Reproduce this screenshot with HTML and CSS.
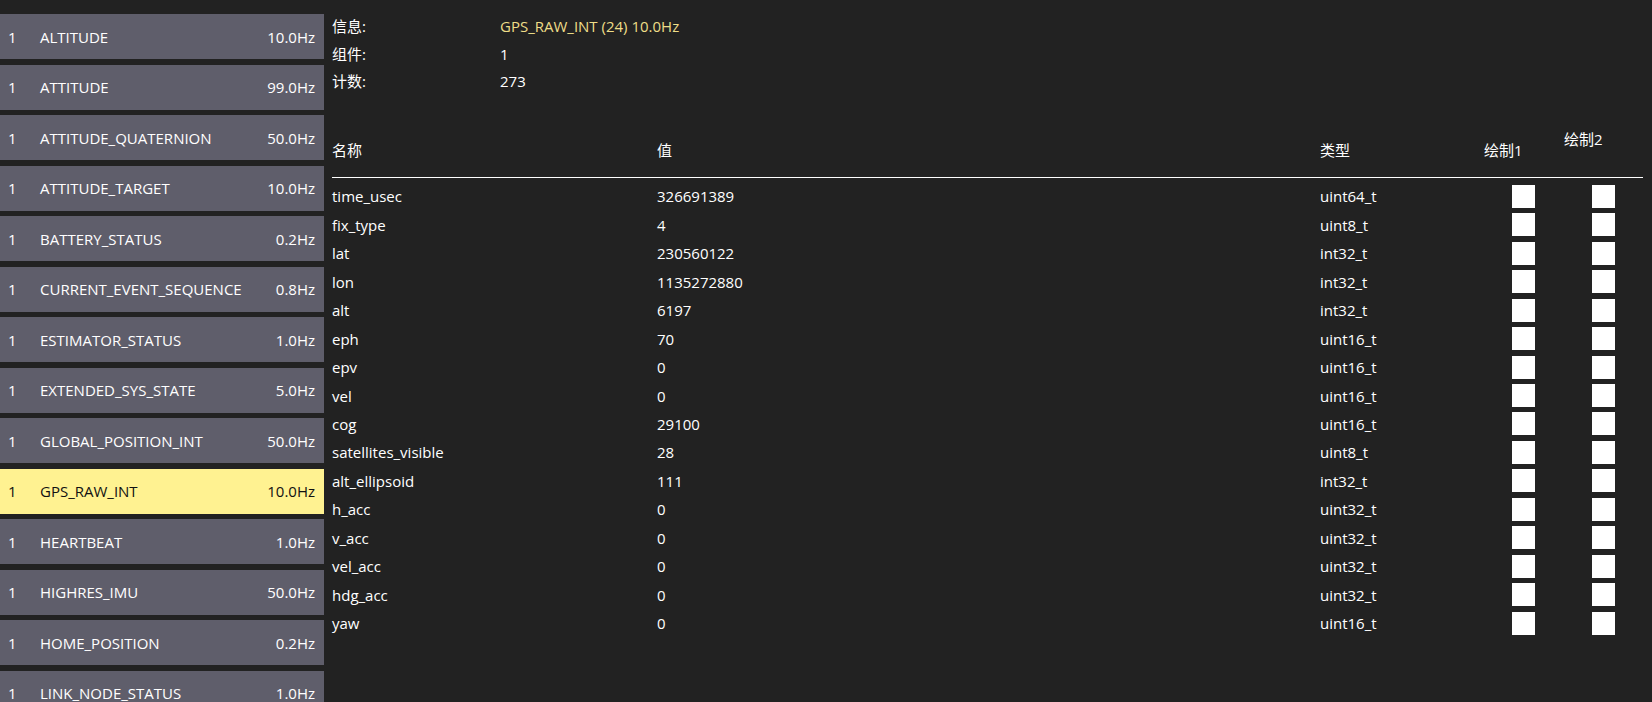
FILE: index.html
```html
<!DOCTYPE html>
<html>
<head>
<meta charset="utf-8">
<link rel="stylesheet" href="styles.css">
</head>
<body>
<div class="app">
  <div class="sidebar">
    <div class="msg"><span class="cid">1</span><span class="mname">ALTITUDE</span><span class="hz">10.0Hz</span></div>
    <div class="msg"><span class="cid">1</span><span class="mname">ATTITUDE</span><span class="hz">99.0Hz</span></div>
    <div class="msg"><span class="cid">1</span><span class="mname">ATTITUDE_QUATERNION</span><span class="hz">50.0Hz</span></div>
    <div class="msg"><span class="cid">1</span><span class="mname">ATTITUDE_TARGET</span><span class="hz">10.0Hz</span></div>
    <div class="msg"><span class="cid">1</span><span class="mname">BATTERY_STATUS</span><span class="hz">0.2Hz</span></div>
    <div class="msg"><span class="cid">1</span><span class="mname">CURRENT_EVENT_SEQUENCE</span><span class="hz">0.8Hz</span></div>
    <div class="msg"><span class="cid">1</span><span class="mname">ESTIMATOR_STATUS</span><span class="hz">1.0Hz</span></div>
    <div class="msg"><span class="cid">1</span><span class="mname">EXTENDED_SYS_STATE</span><span class="hz">5.0Hz</span></div>
    <div class="msg"><span class="cid">1</span><span class="mname">GLOBAL_POSITION_INT</span><span class="hz">50.0Hz</span></div>
    <div class="msg selected"><span class="cid">1</span><span class="mname">GPS_RAW_INT</span><span class="hz">10.0Hz</span></div>
    <div class="msg"><span class="cid">1</span><span class="mname">HEARTBEAT</span><span class="hz">1.0Hz</span></div>
    <div class="msg"><span class="cid">1</span><span class="mname">HIGHRES_IMU</span><span class="hz">50.0Hz</span></div>
    <div class="msg"><span class="cid">1</span><span class="mname">HOME_POSITION</span><span class="hz">0.2Hz</span></div>
    <div class="msg"><span class="cid">1</span><span class="mname">LINK_NODE_STATUS</span><span class="hz">1.0Hz</span></div>
  </div>
  <div class="detail">
    <div class="info">
      <div class="info-row"><span class="ilabel">信息:</span><span class="ivalue accent">GPS_RAW_INT (24) 10.0Hz</span></div>
      <div class="info-row"><span class="ilabel">组件:</span><span class="ivalue">1</span></div>
      <div class="info-row"><span class="ilabel">计数:</span><span class="ivalue">273</span></div>
    </div>
    <div class="thead">
      <span class="th">名称</span>
      <span class="th">值</span>
      <span class="th">类型</span>
      <span class="th">绘制1</span>
      <span class="th th-high">绘制2</span>
    </div>
    <div class="tbody">
      <div class="tr"><span>time_usec</span><span>326691389</span><span>uint64_t</span><span class="cb"></span><span class="cb"></span></div>
      <div class="tr"><span>fix_type</span><span>4</span><span>uint8_t</span><span class="cb"></span><span class="cb"></span></div>
      <div class="tr"><span>lat</span><span>230560122</span><span>int32_t</span><span class="cb"></span><span class="cb"></span></div>
      <div class="tr"><span>lon</span><span>1135272880</span><span>int32_t</span><span class="cb"></span><span class="cb"></span></div>
      <div class="tr"><span>alt</span><span>6197</span><span>int32_t</span><span class="cb"></span><span class="cb"></span></div>
      <div class="tr"><span>eph</span><span>70</span><span>uint16_t</span><span class="cb"></span><span class="cb"></span></div>
      <div class="tr"><span>epv</span><span>0</span><span>uint16_t</span><span class="cb"></span><span class="cb"></span></div>
      <div class="tr"><span>vel</span><span>0</span><span>uint16_t</span><span class="cb"></span><span class="cb"></span></div>
      <div class="tr"><span>cog</span><span>29100</span><span>uint16_t</span><span class="cb"></span><span class="cb"></span></div>
      <div class="tr"><span>satellites_visible</span><span>28</span><span>uint8_t</span><span class="cb"></span><span class="cb"></span></div>
      <div class="tr"><span>alt_ellipsoid</span><span>111</span><span>int32_t</span><span class="cb"></span><span class="cb"></span></div>
      <div class="tr"><span>h_acc</span><span>0</span><span>uint32_t</span><span class="cb"></span><span class="cb"></span></div>
      <div class="tr"><span>v_acc</span><span>0</span><span>uint32_t</span><span class="cb"></span><span class="cb"></span></div>
      <div class="tr"><span>vel_acc</span><span>0</span><span>uint32_t</span><span class="cb"></span><span class="cb"></span></div>
      <div class="tr"><span>hdg_acc</span><span>0</span><span>uint32_t</span><span class="cb"></span><span class="cb"></span></div>
      <div class="tr"><span>yaw</span><span>0</span><span>uint16_t</span><span class="cb"></span><span class="cb"></span></div>
    </div>
  </div>
</div>
</body>
</html>
```

FILE: styles.css
```css
html, body {
  margin: 0;
  padding: 0;
  height: 100%;
  overflow: hidden;
  background: #222222;
}
body {
  font-family: "Open Sans", "Noto Sans CJK SC", sans-serif;
  font-size: 15px;
  color: #ffffff;
}
.app {
  display: flex;
  height: 702px;
  overflow: hidden;
}
.sidebar {
  width: 324px;
  flex: none;
  padding-top: 14px;
  display: flex;
  flex-direction: column;
  gap: 5.5px;
}
.msg {
  flex: none;
  height: 45px;
  background: #5f5e6b;
  display: flex;
  align-items: center;
  padding: 0 9px 0 8px;
  color: #ffffff;
}
.msg.selected {
  background: #fff291;
  color: #111111;
}
.cid {
  width: 32px;
  flex: none;
}
.mname {
  flex: 1;
}
.hz {
  flex: none;
}
.detail {
  flex: 1;
  padding-left: 8px;
  padding-right: 9px;
  display: flex;
  flex-direction: column;
}
.info {
  padding-top: 13px;
}
.info-row {
  display: flex;
  height: 27.5px;
  line-height: 27.5px;
}
.ilabel {
  width: 168px;
  flex: none;
}
.accent {
  color: #eedd88;
}
.thead, .tr {
  display: grid;
  grid-template-columns: 325px 663px 164px 80px 79px;
}
.thead {
  margin-top: 32px;
  height: 35px;
  border-bottom: 1px solid #ffffff;
  padding-bottom: 14px;
}
.th {
  line-height: 26px;
  align-self: end;
}
.th-high {
  align-self: start;
  margin-top: -2px;
}
.tbody {
  padding-top: 4.5px;
}
.tr {
  height: 28.47px;
  align-items: center;
}
.cb {
  width: 23px;
  height: 23px;
  margin-left: 28px;
  background: #ffffff;
}
```
